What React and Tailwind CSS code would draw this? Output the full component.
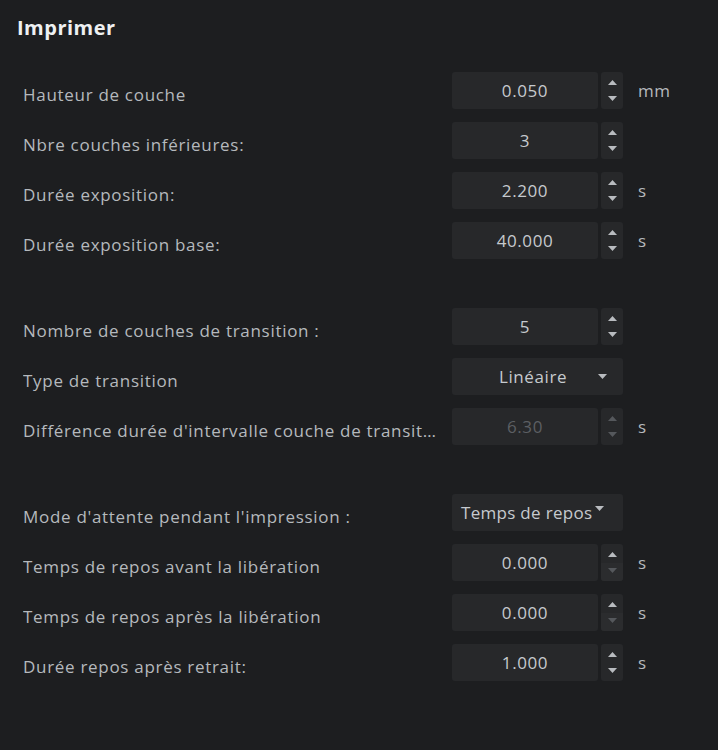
import React from "react";

const Up = ({ dim }) => (
  <svg width="9" height="5" viewBox="0 0 9 5"><path d="M0 5 L4.5 0 L9 5 Z" fill={dim ? "#55585c" : "#b9bcc0"} /></svg>
);
const Down = ({ dim }) => (
  <svg width="9" height="5" viewBox="0 0 9 5"><path d="M0 0 L4.5 5 L9 0 Z" fill={dim ? "#55585c" : "#b9bcc0"} /></svg>
);

function Spin({ disabled, downDisabled }) {
  return (
    <div className="w-[22px] h-[37px] rounded-[3px] bg-[#27282a] flex flex-col overflow-hidden">
      <div className="flex-1 flex items-center justify-center pt-[2px]"><Up dim={disabled} /></div>
      <div className={"flex-1 flex items-center justify-center pb-[2px] " + (downDisabled ? "bg-[#2b2c2e]" : "")}>
        <Down dim={disabled || downDisabled} />
      </div>
    </div>
  );
}

function Label({ children }) {
  return <div className="flex-1 min-w-0 truncate pr-[14px] text-[17px] tracking-[0.7px] text-[#b5b9bd] pt-[8px] leading-[22px]">{children}</div>;
}

function NumRow({ label, value, unit, disabled, downDisabled }) {
  return (
    <div className="flex items-center h-[37px]">
      <Label>{label}</Label>
      <div className="w-[146px] h-[37px] rounded-[3px] bg-[#27282a] flex items-center justify-center">
        <span className={"text-[17px] tracking-[0.6px] " + (disabled ? "text-[#5c5f63]" : "text-[#c6cace]")}>{value}</span>
      </div>
      <div className="ml-[3px]"><Spin disabled={disabled} downDisabled={downDisabled} /></div>
      <div className="w-[95px] pl-[15px] text-[17px] tracking-[0.6px] text-[#b5b9bd]">{unit}</div>
    </div>
  );
}

function SelRow({ label, value, tight }) {
  return (
    <div className="flex items-center h-[37px]">
      <Label>{label}</Label>
      <div className={"w-[171px] h-[37px] rounded-[3px] bg-[#27282a] flex items-center " + (tight ? "pl-[9px] pr-[4px]" : "pl-[10px] pr-[16px]")}>
        <span className={"text-[17px] tracking-[0.3px] text-[#c6cace] whitespace-nowrap " + (tight ? "" : "flex-1 text-center pl-[6px] tracking-[0.6px]")}>{value}</span>
        <span className={tight ? "ml-[3px] -mt-[8px]" : ""}><Down /></span>
      </div>
      <div className="w-[95px]" />
    </div>
  );
}

export default function App() {
  return (
    <div className="w-[718px] h-[750px] bg-[#1d1e20] overflow-hidden" style={{ fontFamily: '"Open Sans", "Noto Sans", sans-serif' }}>
      <div className="pl-[17px] pt-[14px] text-[20px] tracking-[0.5px] font-bold text-[#eef0f2] leading-[28px]">Imprimer</div>
      <div className="pl-[23px] pt-[30px] flex flex-col">
        <div className="flex flex-col gap-[13px]">
          <NumRow label="Hauteur de couche" value="0.050" unit="mm" />
          <NumRow label="Nbre couches inférieures:" value="3" />
          <NumRow label="Durée exposition:" value="2.200" unit="s" />
          <NumRow label="Durée exposition base:" value="40.000" unit="s" />
        </div>
        <div className="flex flex-col gap-[13px] mt-[49px]">
          <NumRow label="Nombre de couches de transition :" value="5" />
          <SelRow label="Type de transition" value="Linéaire" />
          <NumRow label="Différence durée d'intervalle couche de transition" value="6.30" unit="s" disabled />
        </div>
        <div className="flex flex-col gap-[13px] mt-[49px]">
          <SelRow label="Mode d'attente pendant l'impression :" value="Temps de repos" tight />
          <NumRow label="Temps de repos avant la libération" value="0.000" unit="s" downDisabled />
          <NumRow label="Temps de repos après la libération" value="0.000" unit="s" downDisabled />
          <NumRow label="Durée repos après retrait:" value="1.000" unit="s" />
        </div>
      </div>
    </div>
  );
}
